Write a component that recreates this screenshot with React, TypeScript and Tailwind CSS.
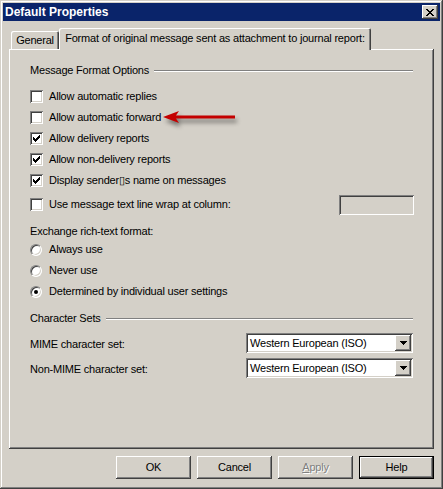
const raised =
  "shadow-[inset_-1px_-1px_#404040,inset_1px_1px_#ffffff,inset_-2px_-2px_#808080]";
const sunken =
  "shadow-[inset_1px_1px_#808080,inset_-1px_-1px_#ffffff,inset_2px_2px_#404040,inset_-2px_-2px_#d4d0c8]";

// pixel runs of the classic 7x7 tick: [row, fromCol, toCol]
const tick: [number, number, number][] = [
  [0, 6, 6],
  [1, 5, 6],
  [2, 0, 0],
  [2, 4, 6],
  [3, 0, 1],
  [3, 3, 5],
  [4, 0, 4],
  [5, 1, 3],
  [6, 2, 2],
];

function CheckBox({ checked }: { checked?: boolean }) {
  return (
    <span
      className={`flex h-[13px] w-[13px] shrink-0 items-center justify-center bg-white ${sunken}`}
    >
      {checked && (
        <svg width="7" height="7" viewBox="0 0 7 7" shapeRendering="crispEdges">
          {tick.map(([r, a, b]) => (
            <rect key={`${r}-${a}`} x={a} y={r} width={b - a + 1} height="1" fill="#000" />
          ))}
        </svg>
      )}
    </span>
  );
}

function Radio({ on }: { on?: boolean }) {
  return (
    <span className="flex h-[12px] w-[12px] shrink-0 items-center justify-center rounded-full border border-t-[#808080] border-l-[#808080] border-r-white border-b-white bg-white shadow-[inset_1px_1px_#404040,inset_-1px_-1px_#d4d0c8]">
      {on && <span className="h-[4px] w-[4px] rounded-full bg-black" />}
    </span>
  );
}

function CheckRow({ label, checked }: { label: string; checked?: boolean }) {
  return (
    <div className="flex h-[21px] items-center gap-[6px]">
      <CheckBox checked={checked} />
      <span>{label}</span>
    </div>
  );
}

function RadioRow({ label, on }: { label: string; on?: boolean }) {
  return (
    <div className="flex h-[21px] items-center gap-[7px]">
      <Radio on={on} />
      <span>{label}</span>
    </div>
  );
}

function GroupTitle({ label }: { label: string }) {
  return (
    <div className="flex h-[13px] items-center gap-[5px] leading-[13px]">
      <span>{label}</span>
      <span className="h-[2px] flex-1 border-t border-b border-t-[#808080] border-b-white" />
    </div>
  );
}

function Combo({ value }: { value: string }) {
  return (
    <div className={`flex h-[20px] w-[167px] items-center bg-white p-[2px] ${sunken}`}>
      <span className="flex-1 pl-[2px]">{value}</span>
      <span className={`flex h-[16px] w-[16px] items-center justify-center bg-[#d4d0c8] ${raised}`}>
        <svg width="7" height="4" viewBox="0 0 7 4" shapeRendering="crispEdges">
          <path d="M0 0h7v1H0zM1 1h5v1H1zM2 2h3v1H2zM3 3h1v1H3z" fill="#000" />
        </svg>
      </span>
    </div>
  );
}

function Button({
  children,
  isDefault,
}: {
  children: React.ReactNode;
  isDefault?: boolean;
}) {
  return (
    <div
      className={`flex h-[23px] w-[75px] items-center justify-center bg-[#d4d0c8] ${
        isDefault
          ? "border border-black shadow-[inset_-1px_-1px_#404040,inset_1px_1px_#ffffff,inset_-2px_-2px_#808080]"
          : raised
      }`}
    >
      {children}
    </div>
  );
}

export default function App() {
  return (
    <div className="h-[489px] w-[443px] bg-[#d4d0c8] p-[3px] font-['Liberation_Sans',Arial,sans-serif] text-[11px] tracking-[-0.2px] text-black shadow-[inset_-1px_-1px_#404040,inset_1px_1px_#d4d0c8,inset_-2px_-2px_#808080,inset_2px_2px_#ffffff]">
      {/* caption bar */}
      <div className="flex h-[18px] items-center justify-between bg-[#0a246a] pl-[2px] pr-[2px]">
        <span className="text-[12px] font-bold tracking-normal text-white">Default Properties</span>
        <span className={`flex h-[14px] w-[16px] items-center justify-center bg-[#d4d0c8] ${raised}`}>
          <svg width="8" height="7" viewBox="0 0 8 7" shapeRendering="crispEdges">
            <path
              d="M0 0h2v1H0zM6 0h2v1H6zM1 1h2v1H1zM5 1h2v1H5zM2 2h4v1H2zM3 3h2v1H3zM2 4h4v1H2zM1 5h2v1H1zM5 5h2v1H5zM0 6h2v1H0zM6 6h2v1H6z"
              fill="#000"
            />
          </svg>
        </span>
      </div>

      <div className="px-[6px]">
        {/* tab strip */}
        <div className="mt-[7px] flex items-end">
          <div className="ml-[2px] flex h-[18px] w-[48px] items-center justify-center rounded-t-[2px] shadow-[inset_1px_1px_#ffffff,inset_-1px_0_#404040,inset_-2px_0_#808080]">
            General
          </div>
          <div className="relative z-10 -mb-px flex h-[22px] w-[312px] items-center justify-center rounded-t-[2px] bg-[#d4d0c8] pb-[1px] shadow-[inset_1px_1px_#ffffff,inset_-1px_0_#404040,inset_-2px_0_#808080]">
            Format of original message sent as attachment to journal report:
          </div>
        </div>

        {/* tab page */}
        <div className={`relative flex h-[400px] flex-col px-[21px] pt-[15px] ${raised}`}>
          <GroupTitle label="Message Format Options" />
          <div className="mt-[9px]">
            <CheckRow label="Allow automatic replies" />
            <CheckRow label="Allow automatic forward" />
            <CheckRow label="Allow delivery reports" checked />
            <CheckRow label="Allow non-delivery reports" checked />
            <CheckRow label="Display sender▯s name on messages" checked />
          </div>
          <div className="mt-[3px] flex h-[21px] items-center gap-[6px]">
            <CheckBox />
            <span>Use message text line wrap at column:</span>
            <span className={`ml-auto mr-[-1px] h-[20px] w-[75px] bg-[#d4d0c8] ${sunken}`} />
          </div>

          <div className="mt-[10px] h-[13px] leading-[13px]">Exchange rich-text format:</div>
          <div className="mt-[1px]">
            <RadioRow label="Always use" />
            <RadioRow label="Never use" />
            <RadioRow label="Determined by individual user settings" on />
          </div>

          <div className="mt-[10px]">
            <GroupTitle label="Character Sets" />
          </div>
          <div className="mt-[8px] flex flex-col gap-[5px]">
            <div className="flex items-center justify-between">
              <span className="pt-[2px]">MIME character set:</span>
              <Combo value="Western European (ISO)" />
            </div>
            <div className="flex items-center justify-between">
              <span className="pt-[2px]">Non-MIME character set:</span>
              <Combo value="Western European (ISO)" />
            </div>
          </div>

          {/* red call-out arrow */}
          <svg
            className="absolute left-[151px] top-[57px] drop-shadow-[2px_4px_2px_rgba(0,0,0,0.45)]"
            width="82"
            height="22"
            viewBox="0 0 82 22"
          >
            <path d="M3 11 L19 5 L16 9.5 L75 9.5 L75 12.5 L16 12.5 L19 17 Z" fill="#c40000" />
          </svg>
        </div>

        {/* dialog buttons */}
        <div className="mt-[7px] flex justify-end gap-[6px]">
          <Button>OK</Button>
          <Button>Cancel</Button>
          <Button>
            <span className="text-[#808080] [text-shadow:1px_1px_#ffffff]">
              <span className="underline">A</span>pply
            </span>
          </Button>
          <Button isDefault>Help</Button>
        </div>
      </div>
    </div>
  );
}
